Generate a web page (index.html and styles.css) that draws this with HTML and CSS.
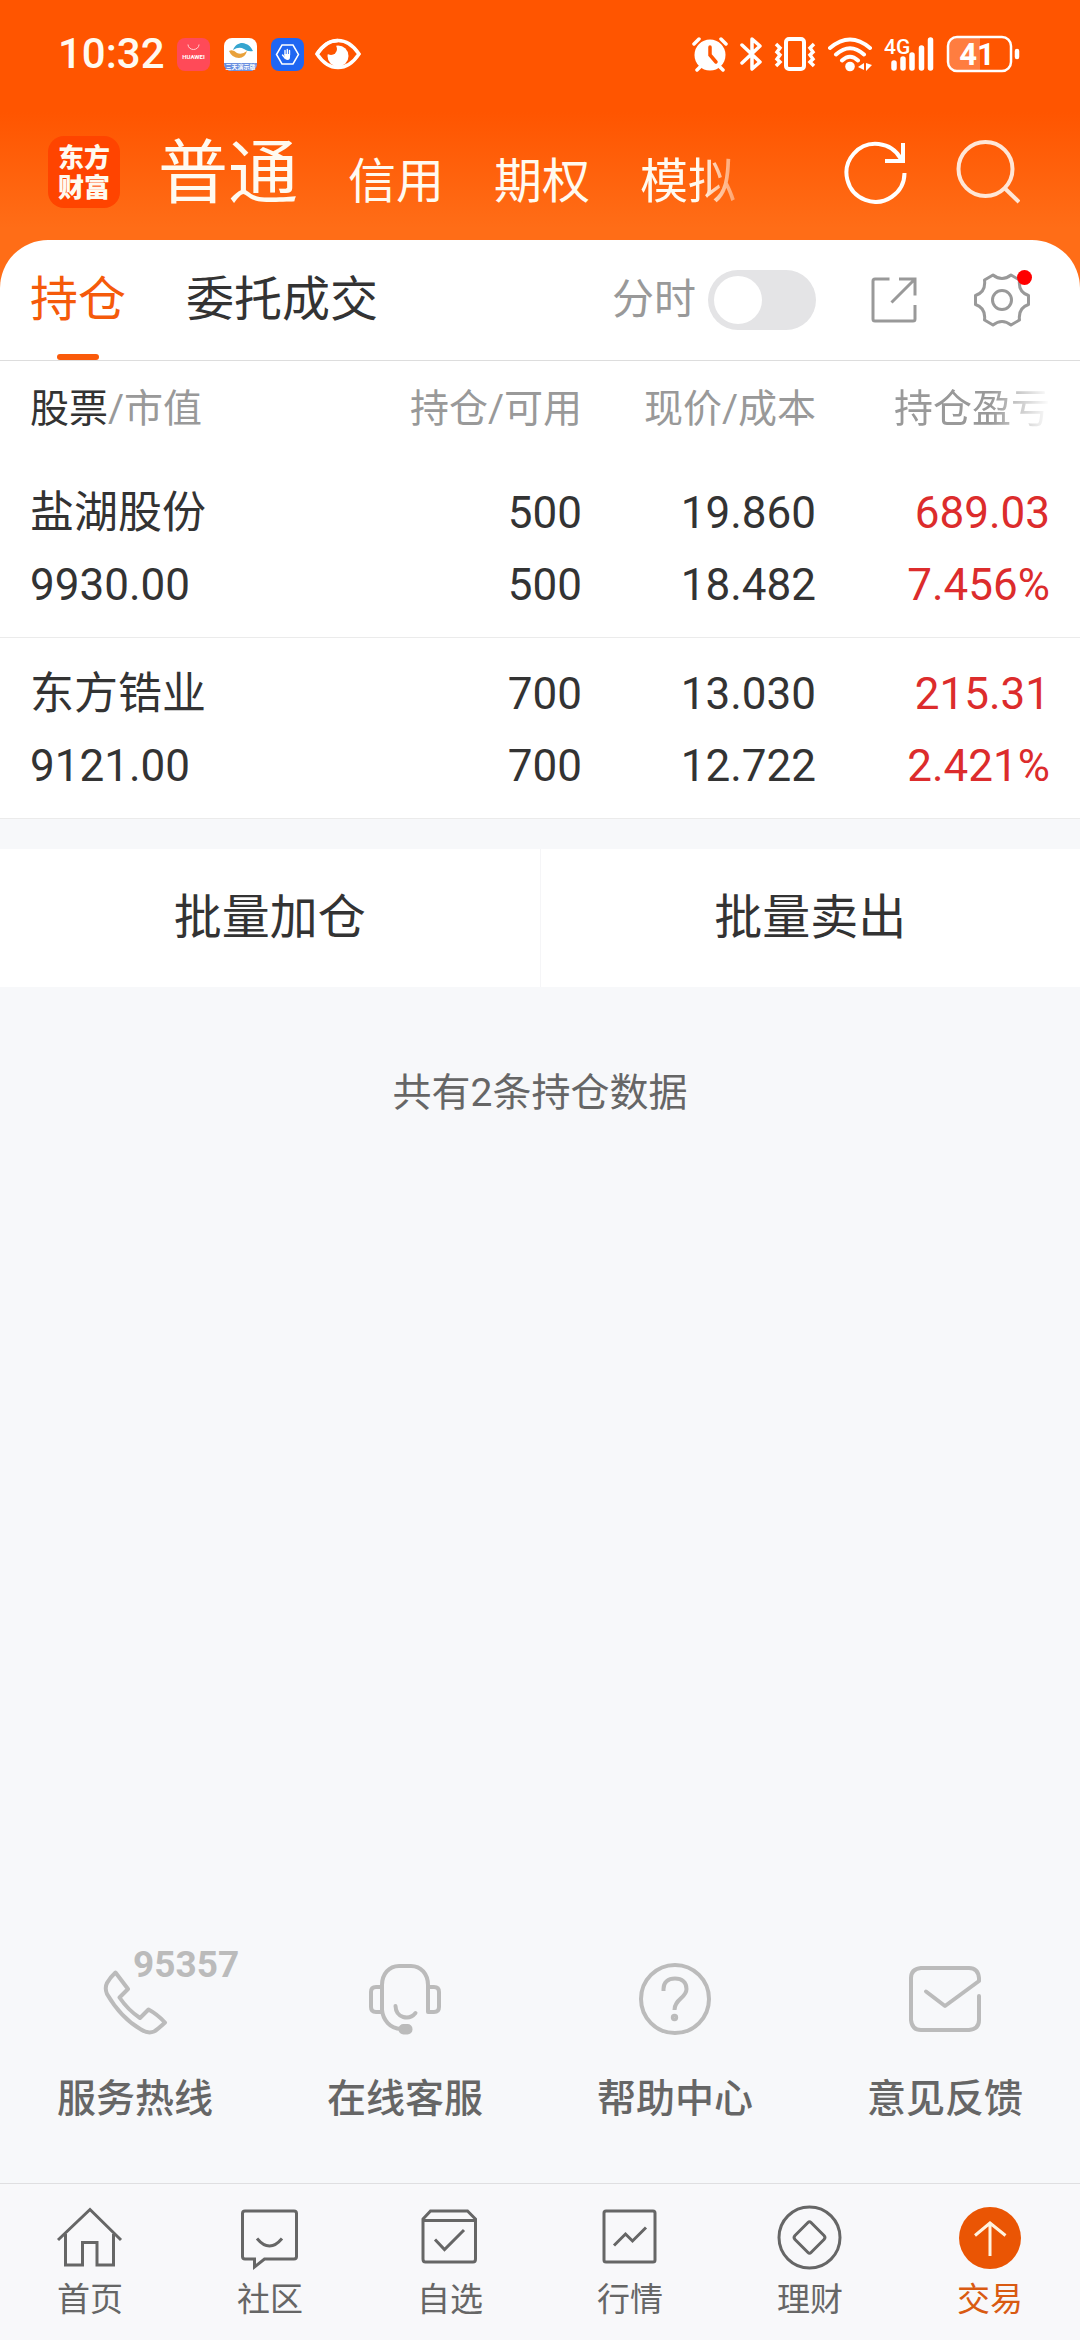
FILE: index.html
```html
<!DOCTYPE html>
<html lang="zh-CN">
	<head>
		<meta charset="utf-8" />
		<meta name="viewport" content="width=device-width" />
		<title>持仓</title>
		<link rel="stylesheet" href="styles.css">
	</head>
	<body>
		<header class="top">
			<!-- 状态栏 -->
			<div class="status">
				<span class="time">10:32</span>
				<div class="apps">
					<svg width="33" height="33" viewBox="0 0 33 33">
						<rect width="33" height="33" rx="8" fill="#ff4a58"/>
						<path d="M11 6.5a5.500 5 0 0 0 11 0" fill="none" stroke="#ffd0d0" stroke-width="1"/>
						<text x="16.5" y="21" class="tiny">HUAWEI</text>
					</svg>
					<svg width="33" height="33" viewBox="0 0 33 33">
						<rect width="33" height="33" rx="8" fill="#fff"/>
						<path d="M9 12C12 5 18 4 22 6Q26 7 29 13Q24 14 20 11Q15 8 9 12Z" fill="#35a5cf"/>
						<path d="M5 13Q9 11 13 15Q18 17 23 13Q21 20 15 20Q8 20 5 13Z" fill="#e9a13b"/>
						<path d="M0 25H33Q33 33 25 33H8Q0 33 0 25Z" fill="#6a8fe0"/>
						<text x="16.5" y="31" class="tiny">三天演示版</text>
					</svg>
					<svg width="33" height="33" viewBox="0 0 33 33">
						<rect width="33" height="33" rx="8" fill="#1f66f2"/>
						<path d="M11 7H22L27.500 16.5L22 26H11L5.500 16.5Z" fill="none" stroke="#fff" stroke-width="1.5"/>
						<path d="M13.500 16H19V19Q19 22 16.5 22Q14.500 22 13.500 20Z" fill="#fff"/>
						<path d="M14 17V12.500M16.3 17V11.500M18.500 17V12.500M11.500 17L14 20" fill="none" stroke="#fff" stroke-width="1.4" stroke-linecap="round"/>
					</svg>
				</div>
				<svg width="46" height="34" viewBox="0 0 46 34">
					<path d="M2 17Q11 3.500 23 3.500T44 17Q35 30.5 23 30.5T2 17Z" fill="none" stroke="#fff" stroke-width="3.5"/>
					<circle cx="23" cy="19" r="10.5" fill="#fff"/>
					<circle cx="16" cy="12" r="6" fill="#ff5500"/>
					<path d="M2 17Q11 3.500 23 3.500" fill="none" stroke="#fff" stroke-width="3.5"/>
				</svg>
				<div class="signals">
					<svg width="36" height="36" viewBox="0 0 36 36">
						<path d="M2 8L7 3M34 8L29 3M8 31L5 34M28 31L31 34" fill="none" stroke="#fff" stroke-width="3.5" stroke-linecap="round"/>
						<circle cx="18" cy="19" r="15.5" fill="#fff"/>
						<path d="M18 11V19L24 26" fill="none" stroke="#ff5500" stroke-width="3.5" stroke-linecap="round"/>
					</svg>
					<svg width="22" height="36" viewBox="0 0 22 36">
						<path d="M2 9L20 26L12 33V3L20 10L2 27" fill="none" stroke="#fff" stroke-width="3.5" stroke-linejoin="round" stroke-linecap="round"/>
					</svg>
					<svg width="42" height="36" viewBox="0 0 42 36">
						<rect x="12" y="3" width="18" height="30" rx="3" fill="none" stroke="#fff" stroke-width="4"/>
						<path d="M2 8L6 12L3 16L6 19L3 23L6 26L2 30M40 8L36 12L39 16L36 19L39 23L36 26L40 30" fill="none" stroke="#fff" stroke-width="3.5"/>
					</svg>
					<svg width="44" height="36" viewBox="0 0 44 36">
						<path d="M2 12Q22 -5 42 12M8 18.5Q22 6 36 18.5M14 24.5Q22 17 30 24.5" fill="none" stroke="#fff" stroke-width="4" stroke-linecap="round"/>
						<circle cx="22" cy="30.5" r="4.8" fill="#fff"/>
						<path d="M36 27V34L30 31ZM38 27L44 29L38 35Z" fill="#fff"/>
					</svg>
					<svg width="50" height="36" viewBox="0 0 50 36">
						<text x="0" y="18" class="net">4G</text>
						<path d="M10 27V32M19 23V32M28 19V32M37.500 12V32M46.500 4V32" stroke="#fff" stroke-width="5.5" stroke-linecap="round"/>
					</svg>
					<svg width="74" height="38" viewBox="0 0 74 38">
						<path d="M12 3H34V35H12Q3 35 3 26V12Q3 3 12 3Z" fill="#ff7d40"/>
						<rect x="2" y="2" width="63" height="34" rx="9" fill="none" stroke="#fff" stroke-width="2.5"/>
						<path d="M71 16V22" stroke="#fff" stroke-width="4.5" stroke-linecap="round"/>
						<text x="31" y="30" class="level">41</text>
					</svg>
				</div>
			</div>
			<!-- 账户类型 -->
			<div class="account">
				<div class="logo">东方<br>财富</div>
				<nav class="types">
					<a href="#" class="current">普通</a>
					<a href="#">信用</a>
					<a href="#">期权</a>
					<a href="#" class="fade">模拟</a>
				</nav>
				<div class="actions">
					<button type="button" aria-label="刷新">
						<svg width="64" height="64" viewBox="0 0 64 64" fill="none" stroke="#fff" stroke-width="4">
							<path d="M60.5 33A29 29 0 1 1 57 19M59 3V21H41"/>
						</svg>
					</button>
					<button type="button" aria-label="搜索">
						<svg width="64" height="64" viewBox="0 0 64 64" fill="none" stroke="#ffe6d6" stroke-width="4">
							<circle cx="29.5" cy="29" r="27"/>
							<path d="M48.5 48L63 62"/>
						</svg>
					</button>
				</div>
			</div>
		</header>

		<main class="main">
			<section class="card">
				<div class="tabs">
					<a href="#" class="current">持仓</a>
					<a href="#">委托成交</a>
					<div class="tools">
						<label class="switch">分时<input type="checkbox" /></label>
						<button type="button" aria-label="分享">
							<svg width="52" height="52" viewBox="0 0 52 52" fill="none" stroke="#999" stroke-width="3">
								<path d="M21.5 5H7Q5 5 5 7V45Q5 47 7 47H45Q47 47 47 45V31M31 5H47V21.5M23.5 28.5L46 6"/>
							</svg>
						</button>
						<button type="button" class="setting" aria-label="设置">
							<svg width="60" height="60" viewBox="0 0 60 60" fill="none" stroke="#999" stroke-width="3" stroke-linejoin="round">
								<path d="M21 5Q30 12 39 5L47.5 10Q46 22 56.5 25.5V34.5Q46 38 47.5 50L39 55Q30 48 21 55L12.5 50Q14 38 3.5 34.5V25.5Q14 22 12.5 10Z"/>
								<circle cx="30" cy="30" r="9.5"/>
							</svg>
						</button>
					</div>
				</div>
				<table class="stocks">
					<thead>
						<tr>
							<th><b>股票</b>/市值</th>
							<th>持仓/可用</th>
							<th>现价/成本</th>
							<th><span class="more">持仓盈亏</span></th>
						</tr>
					</thead>
					<tbody>
						<tr>
							<td>盐湖股份<br>9930.00</td>
							<td>500<br>500</td>
							<td>19.860<br>18.482</td>
							<td class="up">689.03<br>7.456%</td>
						</tr>
						<tr>
							<td>东方锆业<br>9121.00</td>
							<td>700<br>700</td>
							<td>13.030<br>12.722</td>
							<td class="up">215.31<br>2.421%</td>
						</tr>
					</tbody>
				</table>
			</section>
			<div class="batch">
				<button type="button">批量加仓</button>
				<button type="button">批量卖出</button>
			</div>
			<p class="total">共有2条持仓数据</p>

			<!-- 客服入口 -->
			<div class="service">
				<a href="#">
					<span class="icon">
						<svg width="76" height="76" viewBox="0 0 76 76">
							<path d="M18.5 12.5L31 29L22.5 37.5Q31 50 43 58L51.5 49.5Q60 54 68 62.5Q60 70 57 71.5Q51 74 44 69.5Q24 58 10 34Q7.5 28 10 23Q13 17.5 18.5 12.5Z"/>
						</svg>
						<em>95357</em>
					</span>
					服务热线
				</a>
				<a href="#">
					<span class="icon">
						<svg width="76" height="76" viewBox="0 0 76 76">
							<path d="M15 27H9Q4 27 4 32V47Q4 52 9 52H15M61 27H67Q72 27 72 32V47Q72 52 67 52H61V25C61 14 54 6 44 6H32C22 6 15 14 15 25V50C16 60 23 68.5 34 69"/>
							<path d="M28.5 46C29 58 42 61 48.5 53"/>
							<rect x="33.5" y="66" width="10" height="6.5" rx="3" fill="#bbb"/>
						</svg>
					</span>
					在线客服
				</a>
				<a href="#">
					<span class="icon">
						<svg width="76" height="76" viewBox="0 0 76 76">
							<circle cx="38" cy="39" r="34"/>
							<path d="M26.5 31V29C26.5 22.5 31 18.5 38 18.5S49.5 22.5 49.5 29C49.5 38 37.5 39 37.5 50" stroke-linecap="butt"/>
							<circle cx="37.5" cy="57.5" r="1.7"/>
						</svg>
					</span>
					帮助中心
				</a>
				<a href="#">
					<span class="icon">
						<svg width="76" height="76" viewBox="0 0 76 76">
							<path d="M19 31.5L38 46L72 21V18Q71 8 62 8H14Q4 9 4 18V60Q5 70 14 70H62Q72 69 72 60V36"/>
						</svg>
					</span>
					意见反馈
				</a>
			</div>
		</main>

		<!-- 底部导航 -->
		<nav class="bottom">
			<a href="#">
				<svg width="68" height="68" viewBox="0 0 68 68">
					<path d="M2 36L34 5.5L65 36M9.5 30V61H26.5V38.5H41V61H57.5V30"/>
				</svg>
				首页
			</a>
			<a href="#">
				<svg width="68" height="68" viewBox="0 0 68 68">
					<path d="M9 7H58Q60.5 7 60.5 9.5V52.5Q60.5 55 58 55H28.5L18.5 63V55H9Q6.5 55 6.5 52.5V9.5Q6.5 7 9 7ZM21 34.5Q33.5 49.5 46 34.5"/>
				</svg>
				社区
			</a>
			<a href="#">
				<svg width="68" height="68" viewBox="0 0 68 68">
					<path d="M7 15L14.5 7H51.5L59.5 15V55Q59.5 58 57 58H9.5Q7 58 7 55ZM7 16.5H59.5M19 35.5L28.5 45.5L48 26"/>
				</svg>
				自选
			</a>
			<a href="#">
				<svg width="68" height="68" viewBox="0 0 68 68">
					<rect x="8" y="7" width="51" height="51" rx="2"/>
					<path d="M18 41.5L29.5 30L36.5 37L50 23.5"/>
				</svg>
				行情
			</a>
			<a href="#">
				<svg width="68" height="68" viewBox="0 0 68 68">
					<circle cx="33.5" cy="33.5" r="30.5"/>
					<path d="M35 18.5L48 31.5Q50 33.5 48 35.5L35 48.5Q33.5 50 32 48.5L19 35.5Q17 33.5 19 31.5L32 18.5Q33.5 17 35 18.5Z"/>
				</svg>
				理财
			</a>
			<a href="#" class="current">
				<svg width="68" height="68" viewBox="0 0 68 68">
					<circle cx="34" cy="34" r="31"/>
					<path d="M34 52V19M19 31.5L34 19L49.5 31.5"/>
				</svg>
				交易
			</a>
		</nav>
	</body>
</html>
```

FILE: styles.css
```css
body,p,table,th,td{
	margin: 0;
	padding: 0;
}

body{
	min-height: 100vh;
	display: flex;
	flex-direction: column;
	background: #f7f8fa;
	color: #333333;
	font-family: Roboto, "Noto Sans CJK SC", sans-serif;
	font-size: 39px;
	line-height: 56px;
}

a{
	color: inherit;
	text-decoration: none;
}

button{
	padding: 0;
	border: 0;
	background: none;
	color: inherit;
	font: inherit;
	cursor: pointer;
}

svg{
	display: block;
	flex: none;
}

/* 顶部 */
.top{
	padding-bottom: 80px;
	background: linear-gradient(#ff5500 112px, #ff6d17 228px);
	color: #fffaf0;
}

.status{
	display: flex;
	align-items: center;
	height: 108px;
	padding: 0 60px 0 58px;
}

.time{
	font-size: 42px;
	font-weight: 500;
}

.apps{
	display: flex;
	gap: 14px;
	margin: 0 11px 0 12px;
}

.signals{
	display: flex;
	align-items: center;
	gap: 12px;
	margin-left: auto;
}

.tiny{
	font-size: 6px;
	font-weight: 700;
	fill: #ffffff;
	text-anchor: middle;
}

.net{
	font-size: 21px;
	font-weight: 500;
	fill: #ffffff;
}

.level{
	font-size: 31px;
	font-weight: 700;
	fill: #ffffff;
	text-anchor: middle;
}

.account{
	display: flex;
	align-items: center;
	height: 72px;
	margin-top: 28px;
	padding: 0 60px 0 48px;
}

.logo{
	box-sizing: border-box;
	width: 72px;
	height: 72px;
	padding-top: 5px;
	border-radius: 16px;
	background: #ff4400;
	font-family: "Noto Sans CJK SC", sans-serif;
	font-size: 26px;
	font-weight: 900;
	line-height: 30px;
	text-align: center;
}

.types{
	display: flex;
	align-items: baseline;
	gap: 50px;
	margin-left: 38px;
	padding-top: 12px;
	font-size: 48px;
	line-height: 72px;
}

.types .current{
	font-size: 70px;
}

.types .fade{
	-webkit-mask-image: linear-gradient(to right, #000 60%, rgba(0,0,0,0.4));
	mask-image: linear-gradient(to right, #000 60%, rgba(0,0,0,0.4));
}

.actions{
	display: flex;
	gap: 48px;
	margin-left: auto;
}

/* 持仓 */
.main{
	flex: 1;
	display: flex;
	flex-direction: column;
}

.card{
	margin-top: -48px;
	border-radius: 48px 48px 0 0;
	background: #ffffff;
}

.tabs{
	display: flex;
	align-items: center;
	gap: 60px;
	height: 120px;
	padding: 0 48px 0 30px;
	border-bottom: 1px solid #dddddd;
	font-size: 48px;
	line-height: 120px;
}

.tabs .current{
	position: relative;
	color: #f55a0a;
}

.tabs .current::after{
	content: "";
	position: absolute;
	left: 50%;
	bottom: 0;
	width: 42px;
	height: 6px;
	margin-left: -21px;
	border-radius: 3px;
	background: #fa5a0a;
}

.tools{
	display: flex;
	align-items: center;
	gap: 52px;
	margin-left: auto;
}

.switch{
	display: flex;
	align-items: center;
	gap: 12px;
	color: #999999;
	font-size: 42px;
}

.switch input{
	appearance: none;
	box-sizing: border-box;
	width: 108px;
	height: 60px;
	margin: 0;
	padding: 6px;
	border-radius: 30px;
	background: #e4e4e6;
}

.switch input::before{
	content: "";
	display: block;
	width: 48px;
	height: 48px;
	border-radius: 50%;
	background: #ffffff;
}

.switch input:checked{
	background: #fa5a0a;
}

.switch input:checked::before{
	margin-left: 48px;
}

.setting{
	position: relative;
}

.setting::after{
	content: "";
	position: absolute;
	top: 0;
	right: 0;
	width: 15px;
	height: 15px;
	border-radius: 50%;
	background: #ff0000;
}

.stocks{
	width: 100%;
	table-layout: fixed;
	border-collapse: separate;
	border-spacing: 0;
	text-align: right;
}

.stocks th{
	height: 96px;
	padding-right: 30px;
	color: #999999;
	font-weight: 400;
}

.stocks th:first-child,
.stocks td:first-child{
	width: 35%;
	padding-left: 30px;
	box-sizing: border-box;
	text-align: left;
}

.stocks b{
	color: #333333;
	font-weight: 400;
}

.stocks .more{
	-webkit-mask-image: linear-gradient(to right, #000 62%, transparent);
	mask-image: linear-gradient(to right, #000 62%, transparent);
}

.stocks td{
	padding: 20px 30px 16px 0;
	border-bottom: 1px solid #ebebeb;
	font-size: 44px;
	line-height: 72px;
}

.stocks .up{
	color: #dc2c2c;
}

.batch{
	display: flex;
	margin-top: 30px;
	background: #ffffff;
}

.batch button{
	flex: 1;
	height: 138px;
	font-size: 48px;
}

.batch button + button{
	border-left: 1px solid #f5f5f7;
}

.total{
	margin-top: 78px;
	color: #666666;
	text-align: center;
}

/* 客服 */
.service{
	display: flex;
	margin-top: auto;
	padding-bottom: 56px;
	color: #666666;
	font-weight: 500;
}

.service a{
	flex: 1;
	display: flex;
	flex-direction: column;
	align-items: center;
	gap: 35px;
}

.icon{
	position: relative;
	fill: none;
	stroke: #bbbbbb;
	stroke-width: 4;
	stroke-linejoin: round;
	stroke-linecap: round;
}

.icon em{
	position: absolute;
	left: 36px;
	top: -14px;
	color: #bbbbbb;
	font-size: 37px;
	font-style: normal;
	font-weight: 700;
	line-height: 37px;
}

/* 底部导航 */
.bottom{
	display: flex;
	padding: 20px 0;
	border-top: 1px solid #dfdfe1;
	background: #f8f8fa;
	color: #666666;
	font-size: 33px;
	line-height: 40px;
}

.bottom a{
	flex: 1;
	display: flex;
	flex-direction: column;
	align-items: center;
	gap: 8px;
}

.bottom svg{
	fill: none;
	stroke: #666666;
	stroke-width: 3;
}

.bottom .current{
	color: #d95a12;
}

.bottom .current circle{
	fill: #ea5504;
	stroke: none;
}

.bottom .current path{
	stroke: #fff3e0;
}
```
